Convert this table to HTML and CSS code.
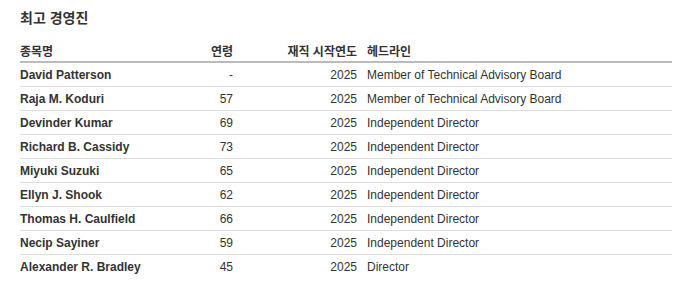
FILE: index.html
```html
<!DOCTYPE html>
<html lang="ko">
<head>
<meta charset="utf-8">
<link rel="stylesheet" href="styles.css">
</head>
<body>
<section class="panel">
  <h2 class="title">최고 경영진</h2>
  <table class="execs">
    <colgroup>
      <col class="c-name"><col class="c-age"><col class="c-year"><col class="c-head">
    </colgroup>
    <thead>
      <tr><th class="left">종목명</th><th class="num">연령</th><th class="num">재직 시작연도</th><th class="left">헤드라인</th></tr>
    </thead>
    <tbody>
      <tr><td class="name">David Patterson</td><td class="num">-</td><td class="num">2025</td><td>Member of Technical Advisory Board</td></tr>
      <tr><td class="name">Raja M. Koduri</td><td class="num">57</td><td class="num">2025</td><td>Member of Technical Advisory Board</td></tr>
      <tr><td class="name">Devinder Kumar</td><td class="num">69</td><td class="num">2025</td><td>Independent Director</td></tr>
      <tr><td class="name">Richard B. Cassidy</td><td class="num">73</td><td class="num">2025</td><td>Independent Director</td></tr>
      <tr><td class="name">Miyuki Suzuki</td><td class="num">65</td><td class="num">2025</td><td>Independent Director</td></tr>
      <tr><td class="name">Ellyn J. Shook</td><td class="num">62</td><td class="num">2025</td><td>Independent Director</td></tr>
      <tr><td class="name">Thomas H. Caulfield</td><td class="num">66</td><td class="num">2025</td><td>Independent Director</td></tr>
      <tr><td class="name">Necip Sayiner</td><td class="num">59</td><td class="num">2025</td><td>Independent Director</td></tr>
      <tr class="last"><td class="name">Alexander R. Bradley</td><td class="num">45</td><td class="num">2025</td><td>Director</td></tr>
    </tbody>
  </table>
</section>
</body>
</html>
```
FILE: styles.css
```css
html, body {
  margin: 0;
  padding: 0;
  background: #fff;
}
body {
  font-family: "Liberation Sans", Arial, "Noto Sans CJK KR", sans-serif;
  color: #333;
}
.panel {
  padding: 9px 12px 0 20px;
}
.title {
  margin: 0 0 12px 0;
  font-size: 14px;
  line-height: 18px;
  font-weight: bold;
  color: #333;
}
.execs {
  width: 652px;
  border-collapse: collapse;
  table-layout: fixed;
  font-size: 12px;
}
.c-name { width: 150px; }
.c-age { width: 68px; }
.c-year { width: 124px; }
.c-head { width: 310px; }
.execs th {
  font-weight: bold;
  height: 22px;
  padding: 0 5px;
  border-bottom: 2px solid #bbb;
  color: #333;
  vertical-align: middle;
}
.execs td {
  height: 23px;
  padding: 0 5px;
  border-bottom: 1px solid #ddd;
  vertical-align: middle;
  white-space: nowrap;
}
.execs th:first-child, .execs td:first-child {
  padding-left: 0;
}
.execs tr.last td {
  border-bottom: none;
}
.left { text-align: left; }
.num { text-align: right; }
.name { font-weight: bold; }
```
